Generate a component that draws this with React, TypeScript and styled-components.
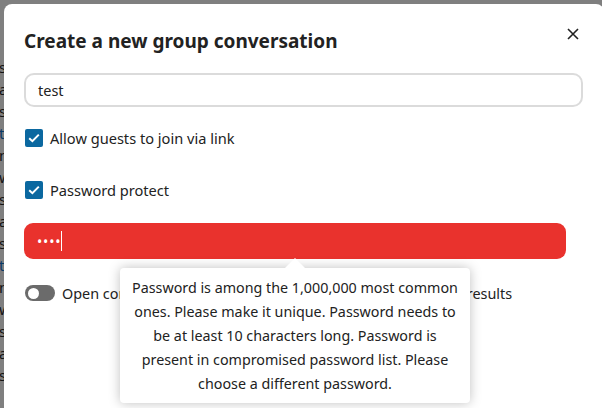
import * as React from "react";
import styled, { createGlobalStyle } from "styled-components";

const GlobalStyle = createGlobalStyle`
  html, body {
    margin: 0;
    padding: 0;
    width: 602px;
    height: 408px;
    overflow: hidden;
    font-family: "Noto Sans", "Open Sans", sans-serif;
    color: #222222;
  }
`;

const backdropLines = ["si", "a", "s", "t", "n", "w", "si", "a", "s", "t", "n", "w", "si", "a", "s"];

const App = (): JSX.Element => {
  const renderBackdrop = (): JSX.Element => {
    return (
      <Backdrop>
        {backdropLines.map((word, i) => (
          <BackdropLine key={i} link={word === "t"}>
            {word}
          </BackdropLine>
        ))}
      </Backdrop>
    );
  };

  const renderCheckbox = (label: string): JSX.Element => {
    return (
      <CheckboxRow>
        <CheckboxBox>
          <svg width="12" height="10" viewBox="0 0 12 10">
            <path d="M1.2 5.2 L4.4 8.2 L10.8 1.6" fill="none" stroke="#ffffff" strokeWidth="2" />
          </svg>
        </CheckboxBox>
        <CheckboxLabel>{label}</CheckboxLabel>
      </CheckboxRow>
    );
  };

  return (
    <>
      <GlobalStyle />
      {renderBackdrop()}
      <Modal>
        <CloseButton aria-label="Close">
          <svg width="12" height="12" viewBox="0 0 12 12">
            <path d="M1 1 L11 11 M11 1 L1 11" stroke="#222222" strokeWidth="1.6" />
          </svg>
        </CloseButton>
        <Title>Create a new group conversation</Title>
        <NameInput>test</NameInput>
        {renderCheckbox("Allow guests to join via link")}
        {renderCheckbox("Password protect")}
        <PasswordWrap>
          <PasswordField>
            <Dots>••••</Dots>
            <Caret />
          </PasswordField>
          <Tooltip>
            Password is among the 1,000,000 most common ones. Please make it unique. Password needs to be at least 10
            characters long. Password is present in compromised password list. Please choose a different password.
          </Tooltip>
        </PasswordWrap>
        <ToggleRow>
          <Toggle>
            <Knob />
          </Toggle>
          <ToggleLabel>Open conversation to registered users, showing it in search results</ToggleLabel>
        </ToggleRow>
      </Modal>
    </>
  );
};

export default App;

const Backdrop = styled.div`
  position: fixed;
  inset: 0;
  background: #7f7f7f;
  display: flex;
  flex-direction: column;
  padding-top: 56px;
`;

const BackdropLine = styled.div<{ link?: boolean }>`
  font-size: 15px;
  line-height: 22px;
  margin-left: -1px;
  color: ${props => (props.link ? "#0b3a66" : "#141414")};
`;

const Modal = styled.div`
  position: fixed;
  left: 4px;
  top: 4px;
  width: 600px;
  height: 440px;
  box-sizing: border-box;
  background: #ffffff;
  border-radius: 8px;
  padding: 23px 20px 0 20px;
  display: flex;
  flex-direction: column;
`;

const CloseButton = styled.button`
  position: absolute;
  top: 20px;
  right: 21px;
  width: 20px;
  height: 20px;
  padding: 0;
  border: none;
  background: transparent;
  display: flex;
  align-items: center;
  justify-content: center;
`;

const Title = styled.h2`
  margin: 0;
  font-size: 19px;
  line-height: 28px;
  font-weight: 700;
  color: #222222;
`;

const NameInput = styled.div`
  margin-top: 18px;
  width: 559px;
  height: 34px;
  box-sizing: border-box;
  border: 2px solid #dbdbdb;
  border-radius: 10px;
  padding-left: 12px;
  display: flex;
  align-items: center;
  font-size: 14.5px;
`;

const CheckboxRow = styled.div`
  display: flex;
  align-items: center;
  height: 34px;
  margin-top: 14px;
  & + & {
    margin-top: 18px;
  }
`;

const CheckboxBox = styled.span`
  width: 18px;
  height: 18px;
  margin-left: 1px;
  border-radius: 2px;
  background: #0b68a0;
  display: flex;
  align-items: center;
  justify-content: center;
`;

const CheckboxLabel = styled.span`
  margin-left: 7px;
  font-size: 14.6px;
  color: #222222;
`;

const PasswordWrap = styled.div`
  position: relative;
  margin-top: 16px;
  width: 542px;
`;

const PasswordField = styled.div`
  height: 36px;
  border-radius: 9px;
  background: #e9322d;
  display: flex;
  align-items: center;
  padding-left: 13px;
`;

const Dots = styled.span`
  color: #ffffff;
  font-size: 14px;
  letter-spacing: 0.8px;
`;

const Caret = styled.span`
  width: 1px;
  height: 20px;
  margin-left: 0;
  background: #ffffff;
`;

const Tooltip = styled.div`
  position: absolute;
  top: 45px;
  left: 96px;
  width: 350px;
  box-sizing: border-box;
  padding: 8px 10px 7px;
  background: #ffffff;
  border-radius: 4px;
  box-shadow: 0 0 12px rgba(0, 0, 0, 0.25);
  font-size: 14.3px;
  line-height: 24px;
  text-align: center;
  color: #222222;
  z-index: 2;
  &::before {
    content: "";
    position: absolute;
    top: -10px;
    left: 165px;
    border-left: 10px solid transparent;
    border-right: 10px solid transparent;
    border-bottom: 10px solid #ffffff;
  }
`;

const ToggleRow = styled.div`
  display: flex;
  align-items: center;
  height: 34px;
  margin-top: 17px;
`;

const Toggle = styled.span`
  width: 30px;
  height: 16px;
  margin-left: 1px;
  border-radius: 8px;
  background: #6b6b6b;
  display: flex;
  align-items: center;
  padding-left: 3px;
  box-sizing: border-box;
`;

const Knob = styled.span`
  width: 11px;
  height: 11px;
  border-radius: 50%;
  background: #ffffff;
`;

const ToggleLabel = styled.span`
  margin-left: 7px;
  font-size: 14.4px;
  white-space: nowrap;
`;
